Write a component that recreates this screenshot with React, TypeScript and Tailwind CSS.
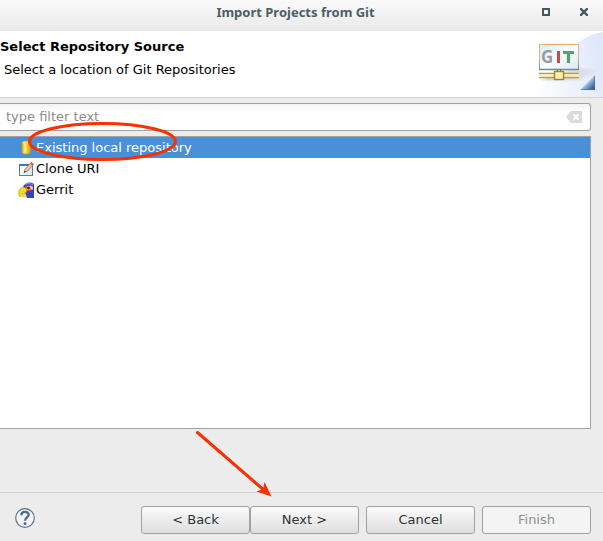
import React from "react";

function MaximizeIcon() {
  return (
    <svg width="8" height="8" viewBox="0 0 8 8" aria-hidden="true">
      <path d="M0 0h8v8h-8zM2 2v4h4v-4z" fill="#45585e" fillRule="evenodd" />
    </svg>
  );
}

function CloseIcon() {
  return (
    <svg width="8" height="8" viewBox="0 0 8 8" aria-hidden="true">
      <path d="M1 1l6 6M7 1l-6 6" stroke="#45585e" strokeWidth="2.400" strokeLinecap="square" />
    </svg>
  );
}

function GitBanner() {
  return (
    <svg className="h-[66px] w-[75px] shrink-0" viewBox="0 0 75 66" aria-hidden="true">
      <defs>
        <linearGradient id="sky" x1="0" y1="0.6" x2="1" y2="0.4">
          <stop offset="0" stopColor="#ffffff" />
          <stop offset="0.5" stopColor="#f0f3fc" />
          <stop offset="1" stopColor="#dfe7fa" />
        </linearGradient>
        <linearGradient id="frame" x1="0" y1="0" x2="0" y2="1">
          <stop offset="0" stopColor="#e9ad75" />
          <stop offset="0.55" stopColor="#c9b9a0" />
          <stop offset="1" stopColor="#6d8791" />
        </linearGradient>
        <linearGradient id="screen" x1="0" y1="0" x2="1" y2="1">
          <stop offset="0" stopColor="#dce9f5" />
          <stop offset="0.5" stopColor="#fafdff" />
          <stop offset="1" stopColor="#dbe8f4" />
        </linearGradient>
        <linearGradient id="corner" x1="0" y1="0" x2="1" y2="1">
          <stop offset="0.4" stopColor="#dcebf8" />
          <stop offset="0.65" stopColor="#6f9bcb" />
          <stop offset="1" stopColor="#1c3c78" />
        </linearGradient>
        <linearGradient id="shade" x1="0" y1="0" x2="1" y2="0">
          <stop offset="0" stopColor="#9c98ae" stopOpacity="0.65" />
          <stop offset="1" stopColor="#b9bdd8" stopOpacity="0.1" />
        </linearGradient>
        <filter id="soft" x="-20%" y="-20%" width="140%" height="140%">
          <feGaussianBlur stdDeviation="1.200" />
        </filter>
      </defs>
      <path d="M75 1C62 3 48 10 38 24C26 42 14 58 0 66H75Z" fill="url(#sky)" />
      <path d="M12 49L50 37L73 39L50 49Z" fill="url(#shade)" filter="url(#soft)" />
      <rect x="11.500" y="13.500" width="39" height="25" fill="url(#screen)" stroke="url(#frame)" />
      <path d="M11 38.500H51" stroke="#6f8a92" strokeWidth="1.500" />
      <g fontFamily="'Open Sans', sans-serif" fontWeight="700" fontSize="17">
        <text x="13" y="32" fill="#9b9b9b">G</text>
        <rect x="29" y="20" width="3" height="12" fill="#c8484c" />
        <path d="M35 21.500H46M40.500 21V32" stroke="#55a367" strokeWidth="3.200" />
      </g>
      <path d="M11 42.500H51M11 46.500H51" stroke="#b3a52d" strokeWidth="1.600" />
      <path d="M11 44.500H51" stroke="#f6f0b0" strokeWidth="2.400" />
      <rect x="26.500" y="40.500" width="9" height="8" fill="#fff0b9" stroke="#a38620" strokeWidth="1.400" />
      <path d="M29.500 38v2M32.500 38v2" stroke="#8d7213" />
      <path d="M67 44V59H52Z" fill="url(#corner)" />
      <path d="M66.500 45V58.500H53" fill="none" stroke="#4a6fa3" strokeWidth="0.700" />
    </svg>
  );
}

function RepositoryIcon() {
  return (
    <svg width="16" height="16" viewBox="0 0 16 16" aria-hidden="true">
      <defs>
        <linearGradient id="gold" x1="0" y1="0" x2="1" y2="0">
          <stop offset="0" stopColor="#e0a91c" />
          <stop offset="0.35" stopColor="#fff09a" />
          <stop offset="0.7" stopColor="#f0c022" />
          <stop offset="1" stopColor="#d9990c" />
        </linearGradient>
      </defs>
      <path d="M4 2.500C4 0.800 12.500 0.800 12.500 2.500V12.500C12.500 14.500 4 14.500 4 12.500Z" fill="url(#gold)" stroke="#c89518" strokeWidth="0.700" />
      <ellipse cx="8.250" cy="2.700" rx="3.800" ry="1.100" fill="#fbe06a" />
    </svg>
  );
}

function CloneIcon() {
  return (
    <svg width="16" height="16" viewBox="0 0 16 16" aria-hidden="true">
      <rect x="1.500" y="3.500" width="13" height="11" fill="#f5fbff" stroke="#5c7fa0" />
      <path d="M1 4H10" stroke="#3f78b5" strokeWidth="2" />
      <path d="M3 13.500L14 6V14Z" fill="#d9edfa" />
      <path d="M6 11.500L7 8.500L13 1.500L15.500 3.500L9.500 10.200Z" fill="#f4c394" stroke="#76513b" strokeWidth="0.600" />
      <path d="M12 2.500L13.500 1L15.800 3L14.300 4.600Z" fill="#c8675a" />
      <path d="M6 11.500L6.500 9.800L8 10.700Z" fill="#222222" />
    </svg>
  );
}

function GerritIcon() {
  return (
    <svg width="16" height="16" viewBox="0 0 16 16" aria-hidden="true">
      <path d="M5 5C6 1.500 10 0 13 0.500L16 2V16H9L6 10Z" fill="#353fc4" />
      <path d="M7.500 2.500C10 1 13 1.500 15 3" fill="none" stroke="#98a8f0" />
      <path d="M7 5C9 2.500 13 2.500 14.500 5C15 8 12.500 10 9.500 9.500Z" fill="#d93535" />
      <path d="M12 3.500L15 5L14.500 8L12.500 7Z" fill="#e9d5e6" />
      <path d="M6 5L9 7.500L8 11C5 10.500 3.500 12 1.500 14.500C-0.500 10 1 6 6 5Z" fill="#f6d821" stroke="#a18627" strokeWidth="0.500" />
      <path d="M1 15C3 12.500 5 11.500 7.500 11.500L9 15.500Z" fill="#e5d56a" />
      <circle cx="10.500" cy="6" r="2.200" fill="#f7a82e" />
      <circle cx="10.500" cy="6" r="1.300" fill="#102030" />
    </svg>
  );
}

function ClearIcon() {
  return (
    <svg width="16" height="12" viewBox="0 0 16 12" aria-hidden="true">
      <path d="M0 6L5 0H16V12H5Z" fill="#d9dbd7" />
      <path d="M7.500 3.500l5 5M12.500 3.500l-5 5" stroke="#ffffff" strokeWidth="2.200" />
    </svg>
  );
}

function HelpIcon() {
  return (
    <svg width="20" height="20" viewBox="0 0 20 20" aria-hidden="true">
      <circle cx="10" cy="10" r="9.300" fill="#f4f5f7" stroke="#5c6f93" strokeWidth="1.200" />
      <path d="M6.300 7.200C6.300 2.800 13.700 2.800 13.700 6.800C13.700 9.300 10 9.300 10 12.800" fill="none" stroke="#536a96" strokeWidth="2.400" />
      <circle cx="10" cy="15.600" r="1.500" fill="#536a96" />
    </svg>
  );
}

const sources = [
  { name: "Existing local repository", icon: <RepositoryIcon />, selected: true },
  { name: "Clone URI", icon: <CloneIcon />, selected: false },
  { name: "Gerrit", icon: <GerritIcon />, selected: false },
];

const buttonStyle =
  "h-[28px] w-[109px] rounded-[3px] border border-[#a1a1a1] bg-linear-to-b from-[#fbfbfb] to-[#dedede] text-[#2e3436] disabled:bg-none disabled:bg-[#f4f4f4] disabled:text-[#8e9192]";

export default function App() {
  return (
    <main className="relative flex min-h-screen flex-col overflow-hidden bg-[#ececec] font-['DejaVu_Sans',sans-serif] text-[13px] leading-[16px] text-black">
      <header className="grid h-[31px] grid-cols-[1fr_auto_1fr] items-center bg-linear-to-b from-[#fafafa] to-[#e9e9e9] pr-[12px] pb-[7px]">
        <h1 className="col-start-2 font-['Noto_Sans',sans-serif] text-[13px] font-bold text-[#4a5f66]">
          Import Projects from Git
        </h1>
        <div className="flex items-center justify-end gap-[30px] pr-[3px]">
          <button type="button" aria-label="Maximize"><MaximizeIcon /></button>
          <button type="button" aria-label="Close"><CloseIcon /></button>
        </div>
      </header>

      <section className="flex h-[67px] justify-between border-b border-[#d2d2d2] bg-white">
        <div className="pt-[8px]">
          <h2 className="font-bold">Select Repository Source</h2>
          <p className="mt-[7px] pl-[4px]">Select a location of Git Repositories</p>
        </div>
        <GitBanner />
      </section>

      <section className="flex flex-1 flex-col pt-[5px] pr-[12px]">
        <div className="flex h-[28px] items-center rounded-r-[3px] border border-l-0 border-[#a1a1a1] bg-linear-to-b from-[#f2f2f2] via-white via-30% to-white pr-[8px]">
          <input
            type="text"
            aria-label="Filter repository sources"
            placeholder="type filter text"
            className="min-w-0 flex-1 bg-transparent pl-[6px] outline-none placeholder:text-[#8b8b8b]"
          />
          <button type="button" aria-label="Clear filter"><ClearIcon /></button>
        </div>
        <ul role="listbox" aria-label="Repository sources" className="mt-[5px] flex-1 border border-l-0 border-[#a1a1a1] bg-white">
          {sources.map((source) => (
            <li
              key={source.name}
              role="option"
              aria-selected={source.selected}
              className="flex h-[21px] items-center gap-[2px] pl-[18px] aria-selected:bg-[#4a90d9] aria-selected:text-white"
            >
              {source.icon}
              <span>{source.name}</span>
            </li>
          ))}
        </ul>
      </section>

      <footer className="mt-[63px] flex h-[49px] items-start justify-between border-t border-[#d2d2d2] pt-[13px] pr-[12px] pl-[15px]">
        <button type="button" aria-label="Help" className="mt-[2px]"><HelpIcon /></button>
        <div className="flex gap-[7px]">
          <div className="flex">
            <button type="button" className={buttonStyle}>&lt; Back</button>
            <button type="button" className={buttonStyle}>Next &gt;</button>
          </div>
          <button type="button" className={buttonStyle}>Cancel</button>
          <button type="button" disabled className={buttonStyle}>Finish</button>
        </div>
      </footer>

      <svg className="pointer-events-none absolute top-0 left-0" width="300" height="510" viewBox="0 0 300 510" aria-hidden="true">
        <ellipse cx="102.500" cy="141.500" rx="73" ry="18" fill="none" stroke="#f73100" strokeWidth="3" />
        <path d="M197.500 432.500L265 491" stroke="#f73100" strokeWidth="3" strokeLinecap="round" />
        <path d="M271.500 496.500L264.500 482L263 489L256.500 491.500Z" fill="#f73100" />
      </svg>
    </main>
  );
}
